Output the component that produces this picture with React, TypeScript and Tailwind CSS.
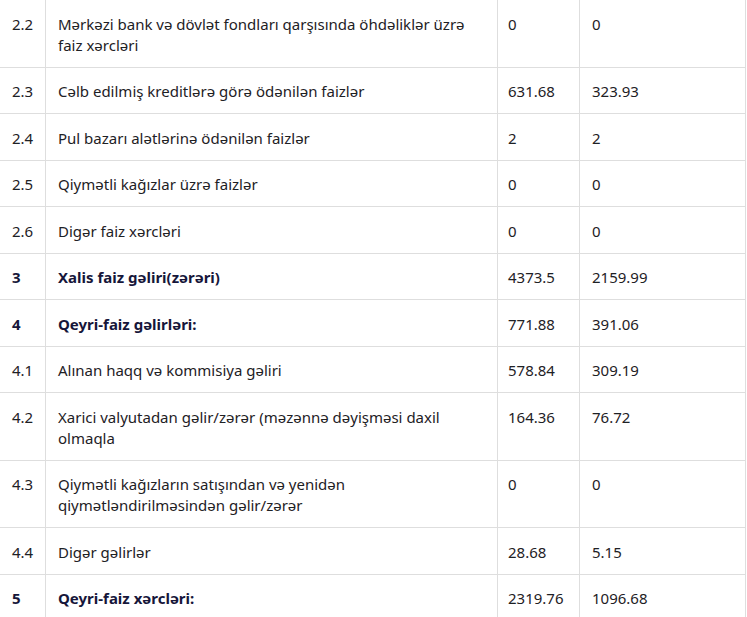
import React from 'react';

type Row = { no: string; label: string; a: string; b: string; bold?: boolean };

const rows: Row[] = [
  { no: '2.2', label: 'Mərkəzi bank və dövlət fondları qarşısında öhdəliklər üzrə faiz xərcləri', a: '0', b: '0' },
  { no: '2.3', label: 'Cəlb edilmiş kreditlərə görə ödənilən faizlər', a: '631.68', b: '323.93' },
  { no: '2.4', label: 'Pul bazarı alətlərinə ödənilən faizlər', a: '2', b: '2' },
  { no: '2.5', label: 'Qiymətli kağızlar üzrə faizlər', a: '0', b: '0' },
  { no: '2.6', label: 'Digər faiz xərcləri', a: '0', b: '0' },
  { no: '3', label: 'Xalis faiz gəliri(zərəri)', a: '4373.5', b: '2159.99', bold: true },
  { no: '4', label: 'Qeyri-faiz gəlirləri:', a: '771.88', b: '391.06', bold: true },
  { no: '4.1', label: 'Alınan haqq və kommisiya gəliri', a: '578.84', b: '309.19' },
  { no: '4.2', label: 'Xarici valyutadan gəlir/zərər (məzənnə dəyişməsi daxil olmaqla', a: '164.36', b: '76.72' },
  { no: '4.3', label: 'Qiymətli kağızların satışından və yenidən qiymətləndirilməsindən gəlir/zərər', a: '0', b: '0' },
  { no: '4.4', label: 'Digər gəlirlər', a: '28.68', b: '5.15' },
  { no: '5', label: 'Qeyri-faiz xərcləri:', a: '2319.76', b: '1096.68', bold: true },
];

const cell = 'border-r border-b border-[#dedede] px-3 pt-[13.5px] pb-[11px] leading-[21px]';

export default function App() {
  return (
    <div className="min-h-screen bg-white overflow-hidden font-['Noto_Sans','Open_Sans',sans-serif] text-[15px] text-[#1e2125]">
      <div className="grid grid-cols-[46px_452px_82px_166px] w-[746px]">
        {rows.map((r) => (
          <React.Fragment key={r.no}>
            <div className={`${cell} ${r.bold ? 'font-bold text-[#16163a]' : ''}`}>{r.no}</div>
            <div className={`${cell} pr-6 ${r.bold ? 'font-bold text-[#16163a]' : ''}`}>{r.label}</div>
            <div className={`${cell} pl-[10px]`}>{r.a}</div>
            <div className={cell}>{r.b}</div>
          </React.Fragment>
        ))}
      </div>
    </div>
  );
}
